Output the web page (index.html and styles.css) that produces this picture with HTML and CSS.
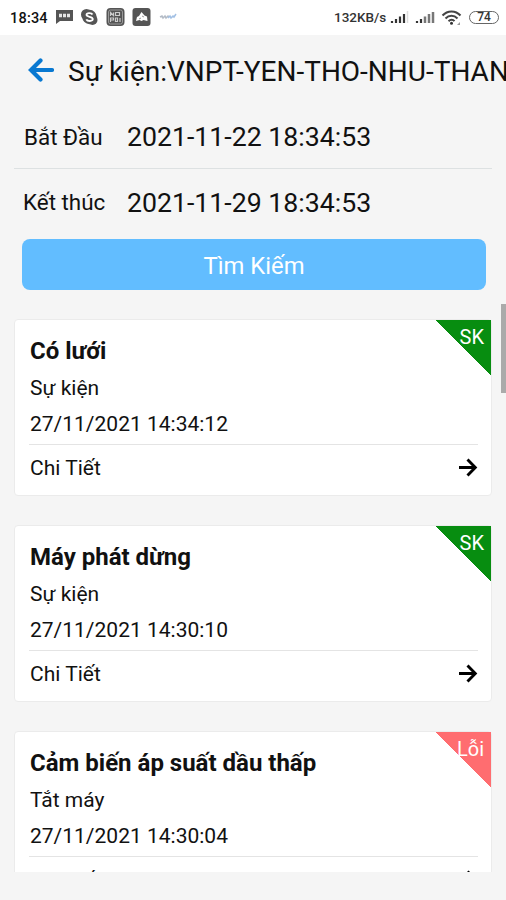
FILE: index.html
```html
<!DOCTYPE html>
<html lang="vi">
<head>
<meta charset="utf-8">
<meta name="viewport" content="width=device-width, initial-scale=1">
<title>Sự kiện</title>
<link rel="stylesheet" href="styles.css">
</head>
<body>
<div class="screen">
  <div class="status">
    <span class="clock">18:34</span>
    <svg class="notifications" width="122" height="20" viewBox="0 0 122 20" aria-hidden="true">
      <path d="M1 3h17v11H5l-4 3z" fill="#555"/>
      <path d="M4 8.500h11" fill="none" stroke="#e5e5e5" stroke-width="3.500" stroke-dasharray="3 1"/>
      <circle cx="31.500" cy="7.500" r="5.500" fill="#555"/><circle cx="37.500" cy="13" r="5" fill="#555"/><circle cx="34.500" cy="10" r="7.200" fill="#555"/>
      <path d="M37.500 7.500c-1-2-6-2-6 .3 0 2.500 6.300 1.500 6.300 4.300 0 2.500-5.500 2.500-6.500.2" fill="none" stroke="#fff" stroke-width="1.800"/>
      <rect x="51.500" y="1" width="18" height="18" rx="4" fill="#555"/>
      <rect x="53.500" y="3" width="14" height="14" rx="2" fill="none" stroke="#999"/>
      <path d="M55.500 9V5.500l3 3V5.500M60.500 5.500h4v3h-4zM55.500 15v-4h3v2h-3M60.500 11h2v3.500h-2zM65 11v4" fill="none" stroke="#ccc" stroke-width="1.200"/>
      <rect x="77.500" y="1" width="18" height="18" rx="3" fill="#555"/>
      <path d="M81 14l1-4 2-1 2.500-4 3 3.500 2.500 1 .500 4.500-4-1-2 1-2-1z" fill="#fff"/>
      <path d="M84 12l2-1M89 10l-2-1" stroke="#999"/>
      <path d="M105 10l2-1 1 2 2-2 1 2 2-2 1 1" fill="none" stroke="#b3bbc6" stroke-width="1.500"/>
      <path d="M113 11l2-2 1 2 2-2 1 1 2-3" fill="none" stroke="#a2c0e4" stroke-width="1.500"/>
    </svg>
    <span class="speed">132KB/s</span>
    <svg class="radios" width="72" height="20" viewBox="0 0 72 20" aria-hidden="true">
      <path d="M2 15v-2M6 15v-4M10 15V8.500M14 15V6" stroke="#333" stroke-width="2.200"/><path d="M17.500 15V3" stroke="#ddd" stroke-width="1.500"/>
      <path d="M27 15v-2M31 15v-4" stroke="#333" stroke-width="2.200"/><path d="M35 15V8.500M39 15V6M43 15V4" stroke="#777" stroke-width="2.500"/>
      <path d="M52.500 7.500c5-5.500 13-5.500 18 0M55.500 10.500c3.500-3.700 8.500-3.700 12 0M58.500 13.200c2-1.800 4.500-1.800 6 0" fill="none" stroke="#444" stroke-width="2"/>
      <circle cx="61.500" cy="15.200" r="1.500" fill="#333"/><path d="M67 17l3-3v3z" fill="#999"/>
    </svg>
    <span class="battery">74</span>
  </div>

  <header class="header">
    <svg class="back" width="26" height="26" viewBox="0 0 26 26" aria-hidden="true">
      <path d="M24 13H3M12.500 3.500L3 13l9.500 9.500" fill="none" stroke="#0878d1" stroke-width="4.200" stroke-linecap="round"/>
    </svg>
    <h1 class="title">Sự kiện:VNPT-YEN-THO-NHU-THAN</h1>
  </header>

  <div class="form">
    <div class="field field-start"><span class="label">Bắt Đầu</span><span class="value">2021-11-22 18:34:53</span></div>
    <div class="field"><span class="label">Kết thúc</span><span class="value">2021-11-29 18:34:53</span></div>
    <button class="search">Tìm Kiếm</button>
  </div>

  <main class="list">
    <article class="card">
      <div class="flag"><span>SK</span></div>
      <h2 class="name">Có lưới</h2>
      <p class="kind">Sự kiện</p>
      <p class="time">27/11/2021 14:34:12</p>
      <div class="detail"><span>Chi Tiết</span>
        <svg width="20" height="20" viewBox="0 0 20 20" aria-hidden="true"><path d="M1 9.500h16M9.500 1.500l7.800 8-7.800 8" fill="none" stroke="#000" stroke-width="2.900"/></svg>
      </div>
    </article>
    <article class="card">
      <div class="flag"><span>SK</span></div>
      <h2 class="name">Máy phát dừng</h2>
      <p class="kind">Sự kiện</p>
      <p class="time">27/11/2021 14:30:10</p>
      <div class="detail"><span>Chi Tiết</span>
        <svg width="20" height="20" viewBox="0 0 20 20" aria-hidden="true"><path d="M1 9.500h16M9.500 1.500l7.800 8-7.800 8" fill="none" stroke="#000" stroke-width="2.900"/></svg>
      </div>
    </article>
    <article class="card">
      <div class="flag flag-error"><span>Lỗi</span></div>
      <h2 class="name">Cảm biến áp suất dầu thấp</h2>
      <p class="kind">Tắt máy</p>
      <p class="time">27/11/2021 14:30:04</p>
      <div class="detail"><span>Chi Tiết</span>
        <svg width="20" height="20" viewBox="0 0 20 20" aria-hidden="true"><path d="M1 9.500h16M9.500 1.500l7.800 8-7.800 8" fill="none" stroke="#000" stroke-width="2.900"/></svg>
      </div>
    </article>
  </main>
  <div class="scrollbar"></div>
</div>
</body>
</html>
```
FILE: styles.css
```css
* { box-sizing: border-box; }
body { margin: 0; background: #f5f5f5; color: #111; font-family: Roboto, "Liberation Sans", sans-serif; }
h1, h2, p { margin: 0; font-weight: 400; }
svg { flex: none; display: block; }
.screen { position: relative; width: 506px; height: 900px; overflow: hidden; display: flex; flex-direction: column; }

.status { flex: none; height: 35px; background: #fff; display: flex; align-items: center; padding: 0 7px 0 10px; }
.clock { width: 45px; padding-top: 1px; font-size: 14.5px; font-weight: 500; letter-spacing: .2px; white-space: nowrap; }
.notifications { margin-top: -1px; }
.speed { margin-left: auto; width: 56px; margin-top: -1px; font-size: 13.5px; font-weight: 500; color: #333; white-space: nowrap; }
.radios { margin-right: 7px; }
.battery { width: 30px; height: 13px; border: 1.5px solid #666; border-radius: 7px; font-size: 12px; line-height: 11px; font-weight: 500; text-align: center; color: #333; }

.header { flex: none; height: 73px; display: flex; align-items: center; padding: 0 0 0 28px; }
.back { margin-right: 14px; margin-top: -4px; }
.title { flex: none; font-size: 28px; line-height: 34px; white-space: nowrap; }

.form { flex: none; margin: 0 14px; }
.field { height: 61px; display: flex; align-items: center; padding-left: 9px; padding-top: 3px; white-space: nowrap; }
.field-start { border-bottom: 1px solid #dde1e2; padding-left: 10px; padding-top: 0; padding-bottom: 1px; margin-bottom: 2px; }
.label { width: 104px; font-size: 22.4px; margin-top: -2px; }
.field-start .label { width: 103px; margin-top: -1px; }
.value { font-size: 26.7px; margin-top: -1px; }
.search { display: block; width: 464px; height: 51px; margin: 7px 0 0 8px; padding: 3px 0 0; border: 0; border-radius: 8px; background: #62bdff; color: #fff; font: 400 23.8px/48px Roboto, "Liberation Sans", sans-serif; }

.list { flex: none; margin: 29px 14px 0; height: 553px; overflow: hidden; display: flex; flex-direction: column; gap: 29px; }
.card { position: relative; flex: none; height: 177px; background: #fff; border: 1px solid #ebebeb; border-radius: 4px; padding: 14px 13px 0 15px; }
.name { font-size: 24px; line-height: 34px; height: 36px; font-weight: 700; white-space: nowrap; }
.kind, .time { font-size: 21px; line-height: 36px; height: 36px; white-space: nowrap; }
.detail { display: flex; justify-content: space-between; align-items: center; height: 47px; margin-top: 2px; margin-left: -1px; padding-left: 1px; border-top: 1px solid #e4e4e4; font-size: 21px; }
.flag { position: absolute; top: 0; right: 0; width: 56px; height: 56px; background: linear-gradient(to top right, transparent 50%, #078d10 50.5%); color: #fff; font-size: 20px; line-height: 34px; text-align: right; padding-right: 7px; }
.flag-error { background: linear-gradient(to top right, transparent 50%, #ff6d70 50.5%); }
.scrollbar { position: absolute; top: 304px; right: 0; width: 5px; height: 89px; background: #aaa; }
```
